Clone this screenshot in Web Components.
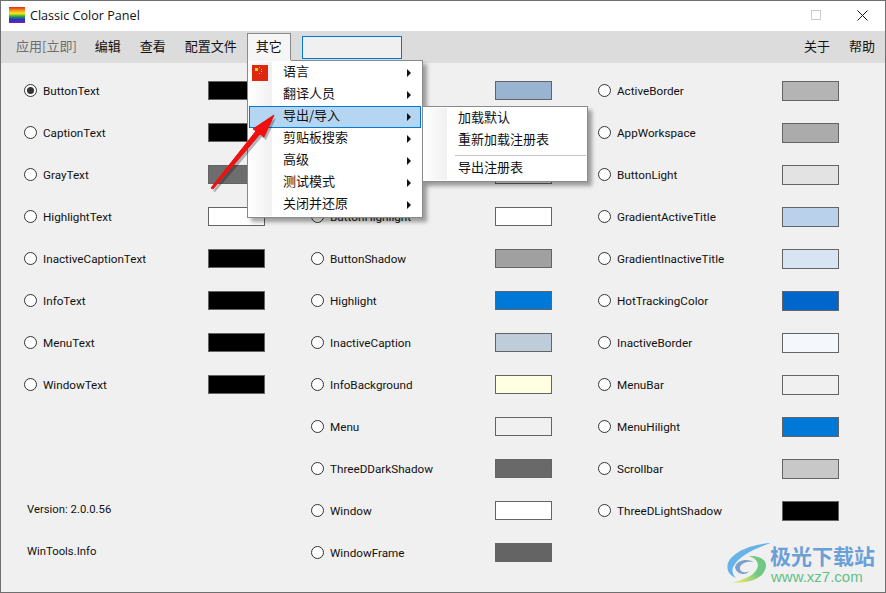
<!DOCTYPE html>
<html lang="zh">
<head>
<meta charset="utf-8">
<title>Classic Color Panel</title>
<style>
	html, body { margin: 0; height: 100%; }
	body { font: 12px Roboto, "Noto Sans CJK SC", sans-serif; }
</style>
</head>
<body>
<ccp-window>
	<ccp-titlebar slot="title">Classic Color Panel</ccp-titlebar>
	<ccp-menubar slot="menu"></ccp-menubar>
	<ccp-panel></ccp-panel>
</ccp-window>

<script>
const FONT = `Roboto, "Noto Sans CJK SC", sans-serif`;
const CJK = `"Noto Sans CJK SC", sans-serif`;

class CcpWindow extends HTMLElement {
	constructor () {
		super();
		this.attachShadow({mode: "open"}).innerHTML = `
			<style>
				:host {
					display: flex;
					flex-direction: column;
					position: relative;
					width: 886px;
					height: 593px;
					box-sizing: border-box;
					border: 1px solid #6f6f6f;
					background: #f0f0f0;
					overflow: hidden;
				}
			</style>
			<slot name="title"></slot>
			<slot name="menu"></slot>
			<slot></slot>
		`;
	}
}

class CcpTitlebar extends HTMLElement {
	constructor () {
		super();
		this.attachShadow({mode: "open"}).innerHTML = `
			<style>
				:host {
					display: flex;
					align-items: flex-start;
					height: 30px;
					background: #fff;
					color: #111;
					font: 12.6px "Open Sans", sans-serif;
					padding-left: 8px;
				}
				#icon {
					width: 16px;
					height: 16px;
					margin: 6px 5px 0 0;
					background: linear-gradient(#e8241c, #f39a1c 22%, #f5e81c 40%, #2fae3a 58%, #2236c8 76%, #7a1ea8);
				}
				#text { flex: 1; line-height: 29px; }
				svg { display: block; margin-top: 9px; }
				#max { margin-right: 36px; }
				#close { margin-right: 17px; }
			</style>
			<div id="icon"></div>
			<div id="text"><slot></slot></div>
			<svg id="max" width="10" height="10"><rect x=".5" y=".5" width="9" height="9" fill="none" stroke="#ccc"/></svg>
			<svg id="close" width="11" height="11"><path d="M.5.5l10 10M10.5.5l-10 10" stroke="#111" fill="none"/></svg>
		`;
	}
}

class CcpMenubar extends HTMLElement {
	constructor () {
		super();
		this.attachShadow({mode: "open"}).innerHTML = `
			<style>
				:host {
					display: flex;
					align-items: center;
					height: 32px;
					background: #dcdcdc;
					color: #111;
					font: 13px ${CJK};
					padding: 0 10px 0 15px;
				}
				span { margin-right: 19px; line-height: 29px; margin-top: -3px; }
				.off { color: #6d6d6d; margin-right: 18px; }
				.open {
					align-self: flex-end;
					height: 30px;
					box-sizing: border-box;
					line-height: 24px;
					margin: 0 0 0 -9px;
					padding: 0 8px;
					background: #f6f6f6;
					border: 1px solid #8a8a8a;
					border-bottom: 0;
				}
				#box {
					box-sizing: border-box;
					width: 100px;
					height: 23px;
					margin-left: 11px;
					margin-top: 1px;
					border: 1px solid #0078d7;
					background: #f0f0f0;
				}
				#gap { flex: 1; }
				.last { margin-right: 0; }
			</style>
			<span class="off">应用[立即]</span>
			<span>编辑</span>
			<span>查看</span>
			<span>配置文件</span>
			<span class="open">其它</span>
			<div id="box"></div>
			<div id="gap"></div>
			<span>关于</span>
			<span class="last">帮助</span>
		`;
	}
}

class CcpSwatchRow extends HTMLElement {
	static get observedAttributes () { return ["color"]; }
	constructor () {
		super();
		this.attachShadow({mode: "open"}).innerHTML = `
			<style>
				:host {
					display: flex;
					align-items: flex-start;
					height: 42px;
					color: #111;
					font: 11.7px ${FONT};
				}
				#radio {
					box-sizing: border-box;
					width: 13px;
					height: 13px;
					margin: 15px 6px 0 0;
					border: 1px solid #333;
					border-radius: 50%;
					background: #fff;
					display: flex;
					align-items: center;
					justify-content: center;
				}
				:host([checked]) #radio::after {
					content: "";
					width: 7px;
					height: 7px;
					border-radius: 50%;
					background: #333;
				}
				#label { flex: 1; white-space: nowrap; line-height: 44px; }
				#swatch {
					box-sizing: border-box;
					width: 57px;
					height: 19px;
					margin-top: 12px;
					border: 1px solid #646464;
				}
				:host([tall]) #swatch { height: 20px; }
			</style>
			<div id="radio"></div>
			<div id="label"><slot></slot></div>
			<div id="swatch"></div>
		`;
	}
	attributeChangedCallback () {
		this.shadowRoot.getElementById("swatch").style.background = this.getAttribute("color");
	}
}

// the first three rows of the middle column sit under the open menu, their names can't be read
const COLUMNS = [
	[["ButtonText", "#000", 1], ["CaptionText", "#000"], ["GrayText", "#6d6d6d"], ["HighlightText", "#fff"], ["InactiveCaptionText", "#000"], ["InfoText", "#000"], ["MenuText", "#000"], ["WindowText", "#000"]],
	[["", "#99b4d1"], ["", "#000"], ["", "#f0f0f0"], ["ButtonHighlight", "#fff"], ["ButtonShadow", "#a0a0a0"], ["Highlight", "#0078d7"], ["InactiveCaption", "#bfcddb"], ["InfoBackground", "#ffffe1"], ["Menu", "#f0f0f0"], ["ThreeDDarkShadow", "#696969"], ["Window", "#fff"], ["WindowFrame", "#646464"]],
	[["ActiveBorder", "#b4b4b4"], ["AppWorkspace", "#ababab"], ["ButtonLight", "#e3e3e3"], ["GradientActiveTitle", "#b9d1ea"], ["GradientInactiveTitle", "#d7e4f2"], ["HotTrackingColor", "#0066cc"], ["InactiveBorder", "#f4f7fc"], ["MenuBar", "#f0f0f0"], ["MenuHilight", "#0078d7"], ["Scrollbar", "#c8c8c8"], ["ThreeDLightShadow", "#000"]]
];

class CcpPanel extends HTMLElement {
	constructor () {
		super();
		const rows = (col, extra = "") => col.map(([name, color, checked]) =>
			`<ccp-swatch-row color="${color}"${checked ? " checked" : ""}${extra}>${name}</ccp-swatch-row>`).join("");
		this.attachShadow({mode: "open"}).innerHTML = `
			<style>
				:host {
					display: grid;
					grid-template-columns: 241px 241px 241px;
					column-gap: 46px;
					flex: 1;
					padding: 6px 0 0 23px;
					color: #111;
					font: 11.3px ${FONT};
					align-content: start;
				}
				.col { display: flex; flex-direction: column; }
				.foot { margin-top: 84px; }
				.foot div { height: 42px; line-height: 41px; padding-left: 3px; }
			</style>
			<div class="col">
				${rows(COLUMNS[0])}
				<div class="foot"><div>Version: 2.0.0.56</div><div>WinTools.Info</div></div>
			</div>
			<div class="col">${rows(COLUMNS[1])}</div>
			<div class="col">${rows(COLUMNS[2], " tall")}</div>
			<ccp-popup></ccp-popup>
			<ccp-arrow></ccp-arrow>
			<ccp-watermark></ccp-watermark>
		`;
	}
}

class CcpPopup extends HTMLElement {
	constructor () {
		super();
		const item = (t, cls = "") => `<div class="item ${cls}">${t}<i></i></div>`;
		this.attachShadow({mode: "open"}).innerHTML = `
			<style>
				:host {
					position: absolute;
					left: 0;
					top: 0;
					color: #111;
					font: 13px ${CJK};
				}
				.menu {
					position: absolute;
					box-sizing: border-box;
					background: #fff;
					border: 1px solid #8a8a8a;
					box-shadow: 4px 4px 4px rgba(0,0,0,.35);
					padding: 1px;
				}
				.menu::before {
					content: "";
					position: absolute;
					left: 1px;
					top: 1px;
					bottom: 1px;
					width: 23px;
					background: linear-gradient(90deg, #fff, #f0f0f0);
				}
				#main { left: 246px; top: 59px; width: 176px; height: 158px; }
				#main::after {
					content: "";
					position: absolute;
					left: 0;
					top: -1px;
					width: 43px;
					height: 1px;
					background: #f6f6f6;
				}
				#sub { left: 421px; top: 105px; width: 166px; height: 76px; }
				.item {
					position: relative;
					box-sizing: border-box;
					height: 22px;
					line-height: 17px;
					padding-left: 34px;
					white-space: nowrap;
				}
				.item i {
					position: absolute;
					right: 10px;
					top: 7px;
					border-left: 4px solid #111;
					border-top: 4px solid transparent;
					border-bottom: 4px solid transparent;
				}
				.hot {
					background: #b5d6f3;
					border: 1px solid #0078d7;
					line-height: 15px;
					padding-left: 33px;
				}
				.hot i { right: 9px; top: 6px; }
				#sub hr { position: relative; height: 1px; border: 0; margin: 3px 0 2px 31px; background: #c4c4c4; }
				#flag { position: absolute; left: 4px; top: 4px; z-index: 1; }
			</style>
			<div class="menu" id="main">
				<svg id="flag" width="16" height="16" viewBox="0 0 16 16">
					<rect width="16" height="16" fill="#de2910"/>
					<rect x="3" y="3" width="3" height="3" fill="#ffde00"/>
					<rect x="7" y="2" width="1" height="1" fill="#ffde00"/>
					<rect x="9" y="4" width="1" height="1" fill="#ffde00"/>
					<rect x="9" y="6" width="1" height="1" fill="#ffde00"/>
					<rect x="7" y="8" width="1" height="1" fill="#ffde00"/>
				</svg>
				${item("语言")}
				${item("翻译人员")}
				${item("导出/导入", "hot")}
				${item("剪贴板搜索")}
				${item("高级")}
				${item("测试模式")}
				${item("关闭并还原")}
			</div>
			<div class="menu" id="sub">
				<div class="item">加载默认</div>
				<div class="item">重新加载注册表</div>
				<hr>
				<div class="item">导出注册表</div>
			</div>
		`;
	}
}

class CcpArrow extends HTMLElement {
	constructor () {
		super();
		this.attachShadow({mode: "open"}).innerHTML = `
			<style>
				:host { position: absolute; left: 199px; top: 104px; }
				svg { display: block; overflow: visible; }
			</style>
			<svg width="90" height="90" viewBox="0 0 90 90">
				<path d="M11 83L56 26 53 24 74 10 64 32 60 29 13 84Z" fill="#000" opacity=".28" transform="translate(2 3)"/>
				<path d="M11 83L56 26 53 24 74 10 64 32 60 29 13 84Z" fill="#f01010" stroke="#e81010" stroke-linejoin="round"/>
			</svg>
		`;
	}
}

class CcpWatermark extends HTMLElement {
	constructor () {
		super();
		this.attachShadow({mode: "open"}).innerHTML = `
			<style>
				:host { position: absolute; left: 726px; top: 542px; width: 158px; height: 49px; }
				svg { position: absolute; left: 0; top: 0; }
				#a { position: absolute; left: 43px; top: 0; color: #6a9fd8; font: bold 21px/24px ${CJK}; white-space: nowrap; }
				#b { position: absolute; left: 44px; top: 25px; color: #62c088; font: 15px/18px "Liberation Sans", sans-serif; white-space: nowrap; }
			</style>
			<svg width="46" height="44" viewBox="0 0 46 44">
				<defs>
					<linearGradient id="g" x1="1" y1="0" x2="0" y2="1">
						<stop offset=".45" stop-color="#70c884"/>
						<stop offset=".85" stop-color="#dfe46a"/>
						<stop offset="1" stop-color="#f3dcc4"/>
					</linearGradient>
				</defs>
				<path d="M44 0C26 1 6 8 1 20c-2 7 1 12 8 15-4-4-5-9-1-14C13 13 28 5 44 0Z" fill="#68b2ea"/>
				<path d="M8 24C10 17 20 15 27 19 22 18 15 19 13 24 12 29 18 31 22 28 20 33 9 32 8 24Z" fill="#7aa0d0"/>
				<path d="M22 13C34 12 42 18 38 27 34 37 20 40 5 40 14 37 26 34 30 26 33 19 28 15 22 13Z" fill="url(#g)"/>
			</svg>
			<div id="a">极光下载站</div>
			<div id="b">www.xz7.com</div>
		`;
	}
}

customElements.define("ccp-window", CcpWindow);
customElements.define("ccp-titlebar", CcpTitlebar);
customElements.define("ccp-menubar", CcpMenubar);
customElements.define("ccp-swatch-row", CcpSwatchRow);
customElements.define("ccp-popup", CcpPopup);
customElements.define("ccp-arrow", CcpArrow);
customElements.define("ccp-watermark", CcpWatermark);
customElements.define("ccp-panel", CcpPanel);
</script>
</body>
</html>
